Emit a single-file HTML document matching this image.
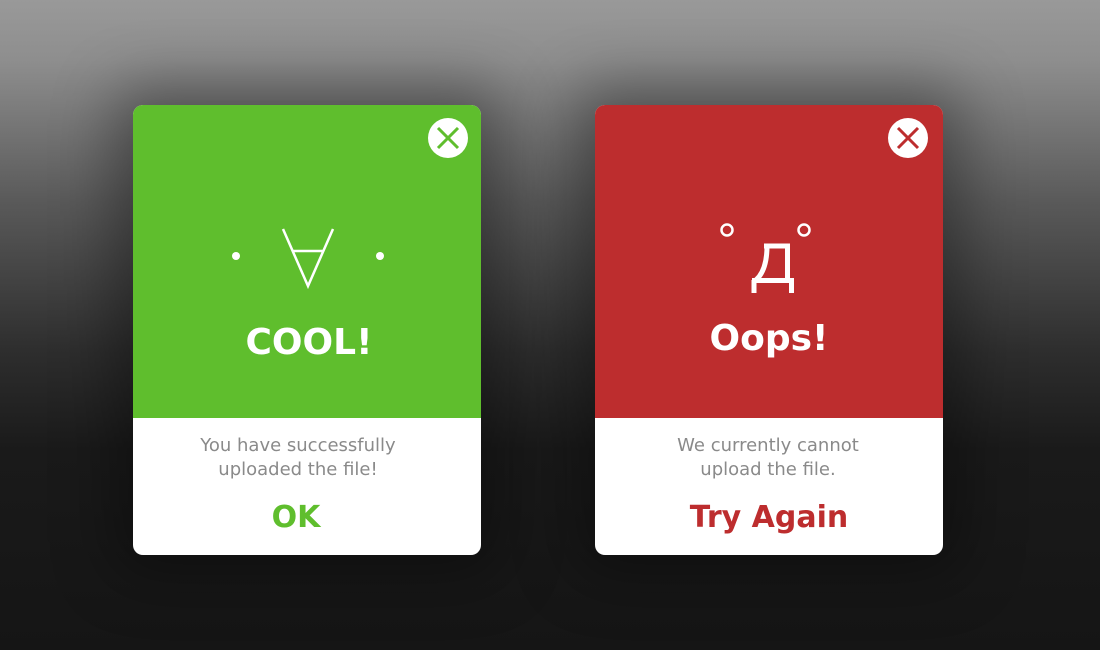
<!DOCTYPE html>
<html><head><style>
*{margin:0;padding:0;box-sizing:border-box}
body{width:1100px;height:650px;overflow:hidden;background:linear-gradient(#999 0px,#8e8e8e 60px,#5a5a5a 200px,#2e2e2e 350px,#1a1a1a 450px,#151515 650px);font-family:"DejaVu Sans","Liberation Sans",sans-serif;position:relative}
.card{position:absolute;top:105px;width:348px;height:450px;border-radius:10px;background:#fff;overflow:hidden;box-shadow:0 0 60px 20px rgba(0,0,0,.35)}
.top{position:absolute;left:0;top:0;width:100%;height:313px}
.t{position:absolute;left:0;width:100%;text-align:center;color:#fff;font-weight:bold;font-size:36px}
.b{position:absolute;left:0;width:100%;text-align:center;color:#8a8a8a;font-size:18px;line-height:24px;top:329px}
.btn{position:absolute;left:0;width:100%;text-align:center;font-weight:bold;font-size:30px;top:395px}
svg{position:absolute;left:0;top:0}
</style></head><body>
<div class="card" style="left:133px">
 <div class="top" style="background:#5fbe2d"></div>
 <svg width="348" height="313">
  <circle cx="315" cy="33" r="20" fill="#fff"/>
  <path d="M305 23L325 43M325 23L305 43" stroke="#5fbe2d" stroke-width="3"/>
  <circle cx="103" cy="151" r="4" fill="#fff"/>
  <circle cx="247" cy="151" r="4" fill="#fff"/>
  <path d="M150 124L175 181L200 124M160 146H191" stroke="#fff" stroke-width="2.5" fill="none"/>
 </svg>
 <div class="t" style="top:217px;left:2px">COOL!</div>
 <div class="b" style="left:-9px">You have successfully<br>uploaded the file!</div>
 <div class="btn" style="color:#5fbe2d;left:-11px">OK</div>
</div>
<div class="card" style="left:595px">
 <div class="top" style="background:#bd2d2e"></div>
 <svg width="348" height="313">
  <circle cx="313" cy="33" r="20" fill="#fff"/>
  <path d="M303 23L323 43M323 23L303 43" stroke="#bd2d2e" stroke-width="3"/>
  <circle cx="132" cy="125" r="5.5" fill="none" stroke="#fff" stroke-width="2.5"/>
  <circle cx="209" cy="125" r="5.5" fill="none" stroke="#fff" stroke-width="2.5"/>
  <path d="M169 141H192.5V176M172 141Q172 165 161 175M157 175.5H199M159 175V188M196.5 175V188" stroke="#fff" stroke-width="5" fill="none"/>
 </svg>
 <div class="t" style="top:213px">Oops!</div>
 <div class="b" style="left:-1px">We currently cannot<br>upload the file.</div>
 <div class="btn" style="color:#bd2d2e">Try Again</div>
</div>
</body></html>
